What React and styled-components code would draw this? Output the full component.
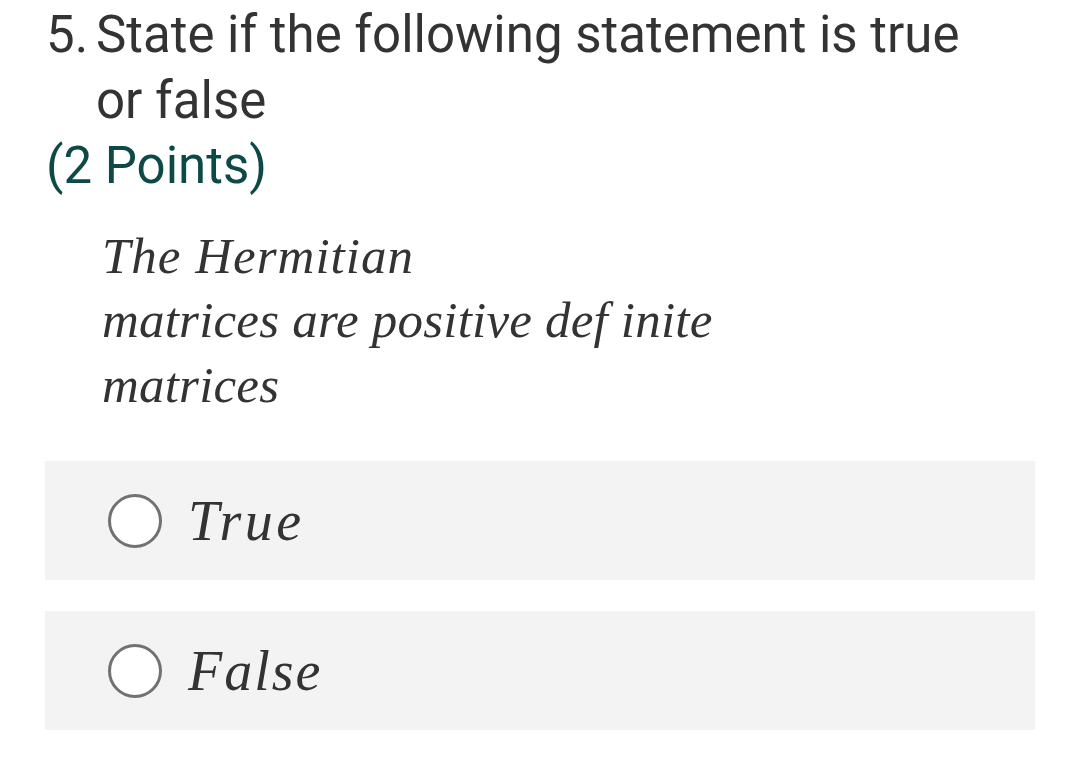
import React from "react";
import styled, { createGlobalStyle } from "styled-components";

const Global = createGlobalStyle`
  html, body { margin: 0; padding: 0; background: #ffffff; }
  body { width: 1080px; height: 761px; overflow: hidden; }
`;

const Page = styled.div`
  padding: 2px 45px 0 46px;
  box-sizing: border-box;
  width: 1080px;
`;

const Title = styled.div`
  display: flex;
  font-family: Roboto, "Noto Sans", sans-serif;
  font-size: 51px;
  line-height: 65.5px;
  color: #333333;
`;

const Num = styled.span`
  flex: 0 0 50px;
`;

const TitleText = styled.span`
  flex: 1;
  white-space: nowrap;
`;

const Points = styled.div`
  font-family: Roboto, "Noto Sans", sans-serif;
  font-size: 51px;
  line-height: 65.5px;
  color: #0d4a47;
`;

const Statement = styled.div`
  margin: 25px 0 0 56px;
  font-family: "Liberation Serif", "Times New Roman", serif;
  font-style: italic;
  font-size: 51px;
  line-height: 64.5px;
  color: #333333;
`;

const Line = styled.div`
  letter-spacing: ${(p) => p.$spacing || "0.2px"};
  white-space: nowrap;
`;

const Options = styled.div`
  margin-top: 44px;
  display: flex;
  flex-direction: column;
  gap: 31px;
  margin-left: -1px;
`;

const Option = styled.label`
  display: flex;
  align-items: center;
  height: 119px;
  width: 990px;
  box-sizing: border-box;
  padding-left: 63px;
  background: #f3f3f3;
`;

const Radio = styled.span`
  width: 54px;
  height: 54px;
  box-sizing: border-box;
  border: 3px solid #717171;
  border-radius: 50%;
  background: #ffffff;
  flex: 0 0 auto;
`;

const Label = styled.span`
  margin-left: 26px;
  font-family: "Liberation Serif", "Times New Roman", serif;
  font-style: italic;
  font-size: 56px;
  letter-spacing: ${(p) => p.$spacing || "2px"};
  color: #333333;
  line-height: 1;
`;

export default function App() {
  return (
    <Page>
      <Global />
      <Title>
        <Num>5.</Num>
        <TitleText>
          State if the following statement is true
          <br />
          or false
        </TitleText>
      </Title>
      <Points>(2 Points)</Points>
      <Statement>
        <Line $spacing="1px">The Hermitian</Line>
        <Line>matrices are positive def inite</Line>
        <Line>matrices</Line>
      </Statement>
      <Options>
        <Option>
          <Radio />
          <Label $spacing="3.5px">True</Label>
        </Option>
        <Option>
          <Radio />
          <Label>False</Label>
        </Option>
      </Options>
    </Page>
  );
}
